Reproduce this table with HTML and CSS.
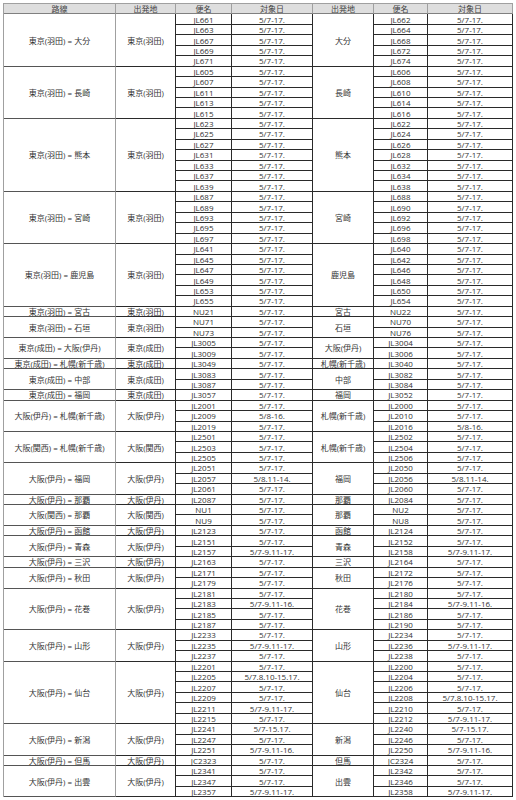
FILE: index.html
```html
<!DOCTYPE html>
<html lang="ja">
<head>
<meta charset="utf-8">
<title>対象便一覧</title>
<link rel="stylesheet" href="styles.css">
</head>
<body>
<table class="flights">
<colgroup>
<col class="c-route"><col class="c-orig"><col class="c-no"><col class="c-date"><col class="c-orig2"><col class="c-no2"><col class="c-date2">
</colgroup>
<thead>
<tr><th class="route">路線</th><th>出発地</th><th>便名</th><th>対象日</th><th>出発地</th><th>便名</th><th>対象日</th></tr>
</thead>
<tbody>
<tr><td class="route" rowspan="5">東京(羽田) = 大分</td><td rowspan="5">東京(羽田)</td><td>JL661</td><td>5/7-17.</td><td rowspan="5">大分</td><td>JL662</td><td>5/7-17.</td></tr>
<tr><td>JL663</td><td>5/7-17.</td><td>JL664</td><td>5/7-17.</td></tr>
<tr><td>JL667</td><td>5/7-17.</td><td>JL668</td><td>5/7-17.</td></tr>
<tr><td>JL669</td><td>5/7-17.</td><td>JL672</td><td>5/7-17.</td></tr>
<tr><td>JL671</td><td>5/7-17.</td><td>JL674</td><td>5/7-17.</td></tr>

<tr><td class="route" rowspan="5">東京(羽田) = 長崎</td><td rowspan="5">東京(羽田)</td><td>JL605</td><td>5/7-17.</td><td rowspan="5">長崎</td><td>JL606</td><td>5/7-17.</td></tr>
<tr><td>JL607</td><td>5/7-17.</td><td>JL608</td><td>5/7-17.</td></tr>
<tr><td>JL611</td><td>5/7-17.</td><td>JL610</td><td>5/7-17.</td></tr>
<tr><td>JL613</td><td>5/7-17.</td><td>JL614</td><td>5/7-17.</td></tr>
<tr><td>JL615</td><td>5/7-17.</td><td>JL616</td><td>5/7-17.</td></tr>

<tr><td class="route" rowspan="7">東京(羽田) = 熊本</td><td rowspan="7">東京(羽田)</td><td>JL623</td><td>5/7-17.</td><td rowspan="7">熊本</td><td>JL622</td><td>5/7-17.</td></tr>
<tr><td>JL625</td><td>5/7-17.</td><td>JL624</td><td>5/7-17.</td></tr>
<tr><td>JL627</td><td>5/7-17.</td><td>JL626</td><td>5/7-17.</td></tr>
<tr><td>JL631</td><td>5/7-17.</td><td>JL628</td><td>5/7-17.</td></tr>
<tr><td>JL633</td><td>5/7-17.</td><td>JL632</td><td>5/7-17.</td></tr>
<tr><td>JL637</td><td>5/7-17.</td><td>JL634</td><td>5/7-17.</td></tr>
<tr><td>JL639</td><td>5/7-17.</td><td>JL638</td><td>5/7-17.</td></tr>

<tr><td class="route" rowspan="5">東京(羽田) = 宮崎</td><td rowspan="5">東京(羽田)</td><td>JL687</td><td>5/7-17.</td><td rowspan="5">宮崎</td><td>JL688</td><td>5/7-17.</td></tr>
<tr><td>JL689</td><td>5/7-17.</td><td>JL690</td><td>5/7-17.</td></tr>
<tr><td>JL693</td><td>5/7-17.</td><td>JL692</td><td>5/7-17.</td></tr>
<tr><td>JL695</td><td>5/7-17.</td><td>JL696</td><td>5/7-17.</td></tr>
<tr><td>JL697</td><td>5/7-17.</td><td>JL698</td><td>5/7-17.</td></tr>

<tr><td class="route" rowspan="6">東京(羽田) = 鹿児島</td><td rowspan="6">東京(羽田)</td><td>JL641</td><td>5/7-17.</td><td rowspan="6">鹿児島</td><td>JL640</td><td>5/7-17.</td></tr>
<tr><td>JL645</td><td>5/7-17.</td><td>JL642</td><td>5/7-17.</td></tr>
<tr><td>JL647</td><td>5/7-17.</td><td>JL646</td><td>5/7-17.</td></tr>
<tr><td>JL649</td><td>5/7-17.</td><td>JL648</td><td>5/7-17.</td></tr>
<tr><td>JL653</td><td>5/7-17.</td><td>JL650</td><td>5/7-17.</td></tr>
<tr><td>JL655</td><td>5/7-17.</td><td>JL654</td><td>5/7-17.</td></tr>

<tr><td class="route">東京(羽田) = 宮古</td><td>東京(羽田)</td><td>NU21</td><td>5/7-17.</td><td>宮古</td><td>NU22</td><td>5/7-17.</td></tr>

<tr><td class="route" rowspan="2">東京(羽田) = 石垣</td><td rowspan="2">東京(羽田)</td><td>NU71</td><td>5/7-17.</td><td rowspan="2">石垣</td><td>NU70</td><td>5/7-17.</td></tr>
<tr><td>NU73</td><td>5/7-17.</td><td>NU76</td><td>5/7-17.</td></tr>

<tr><td class="route" rowspan="2">東京(成田) = 大阪(伊丹)</td><td rowspan="2">東京(成田)</td><td>JL3005</td><td>5/7-17.</td><td rowspan="2">大阪(伊丹)</td><td>JL3004</td><td>5/7-17.</td></tr>
<tr><td>JL3009</td><td>5/7-17.</td><td>JL3006</td><td>5/7-17.</td></tr>

<tr><td class="route">東京(成田) = 札幌(新千歳)</td><td>東京(成田)</td><td>JL3049</td><td>5/7-17.</td><td>札幌(新千歳)</td><td>JL3040</td><td>5/7-17.</td></tr>

<tr><td class="route" rowspan="2">東京(成田) = 中部</td><td rowspan="2">東京(成田)</td><td>JL3083</td><td>5/7-17.</td><td rowspan="2">中部</td><td>JL3082</td><td>5/7-17.</td></tr>
<tr><td>JL3087</td><td>5/7-17.</td><td>JL3084</td><td>5/7-17.</td></tr>

<tr><td class="route">東京(成田) = 福岡</td><td>東京(成田)</td><td>JL3057</td><td>5/7-17.</td><td>福岡</td><td>JL3052</td><td>5/7-17.</td></tr>

<tr><td class="route" rowspan="3">大阪(伊丹) = 札幌(新千歳)</td><td rowspan="3">大阪(伊丹)</td><td>JL2001</td><td>5/7-17.</td><td rowspan="3">札幌(新千歳)</td><td>JL2000</td><td>5/7-17.</td></tr>
<tr><td>JL2009</td><td>5/8-16.</td><td>JL2010</td><td>5/7-17.</td></tr>
<tr><td>JL2019</td><td>5/7-17.</td><td>JL2016</td><td>5/8-16.</td></tr>

<tr><td class="route" rowspan="3">大阪(関西) = 札幌(新千歳)</td><td rowspan="3">大阪(関西)</td><td>JL2501</td><td>5/7-17.</td><td rowspan="3">札幌(新千歳)</td><td>JL2502</td><td>5/7-17.</td></tr>
<tr><td>JL2503</td><td>5/7-17.</td><td>JL2504</td><td>5/7-17.</td></tr>
<tr><td>JL2505</td><td>5/7-17.</td><td>JL2506</td><td>5/7-17.</td></tr>

<tr><td class="route" rowspan="3">大阪(伊丹) = 福岡</td><td rowspan="3">大阪(伊丹)</td><td>JL2051</td><td>5/7-17.</td><td rowspan="3">福岡</td><td>JL2050</td><td>5/7-17.</td></tr>
<tr><td>JL2057</td><td>5/8.11-14.</td><td>JL2056</td><td>5/8.11-14.</td></tr>
<tr><td>JL2061</td><td>5/7-17.</td><td>JL2060</td><td>5/7-17.</td></tr>

<tr><td class="route">大阪(伊丹) = 那覇</td><td>大阪(伊丹)</td><td>JL2087</td><td>5/7-17.</td><td>那覇</td><td>JL2084</td><td>5/7-17.</td></tr>

<tr><td class="route" rowspan="2">大阪(関西) = 那覇</td><td rowspan="2">大阪(関西)</td><td>NU1</td><td>5/7-17.</td><td rowspan="2">那覇</td><td>NU2</td><td>5/7-17.</td></tr>
<tr><td>NU9</td><td>5/7-17.</td><td>NU8</td><td>5/7-17.</td></tr>

<tr><td class="route">大阪(伊丹) = 函館</td><td>大阪(伊丹)</td><td>JL2123</td><td>5/7-17.</td><td>函館</td><td>JL2124</td><td>5/7-17.</td></tr>

<tr><td class="route" rowspan="2">大阪(伊丹) = 青森</td><td rowspan="2">大阪(伊丹)</td><td>JL2151</td><td>5/7-17.</td><td rowspan="2">青森</td><td>JL2152</td><td>5/7-17.</td></tr>
<tr><td>JL2157</td><td>5/7-9.11-17.</td><td>JL2158</td><td>5/7-9.11-17.</td></tr>

<tr><td class="route">大阪(伊丹) = 三沢</td><td>大阪(伊丹)</td><td>JL2163</td><td>5/7-17.</td><td>三沢</td><td>JL2164</td><td>5/7-17.</td></tr>

<tr><td class="route" rowspan="2">大阪(伊丹) = 秋田</td><td rowspan="2">大阪(伊丹)</td><td>JL2171</td><td>5/7-17.</td><td rowspan="2">秋田</td><td>JL2172</td><td>5/7-17.</td></tr>
<tr><td>JL2179</td><td>5/7-17.</td><td>JL2176</td><td>5/7-17.</td></tr>

<tr><td class="route" rowspan="4">大阪(伊丹) = 花巻</td><td rowspan="4">大阪(伊丹)</td><td>JL2181</td><td>5/7-17.</td><td rowspan="4">花巻</td><td>JL2180</td><td>5/7-17.</td></tr>
<tr><td>JL2183</td><td>5/7-9.11-16.</td><td>JL2184</td><td>5/7-9.11-16.</td></tr>
<tr><td>JL2185</td><td>5/7-17.</td><td>JL2186</td><td>5/7-17.</td></tr>
<tr><td>JL2187</td><td>5/7-17.</td><td>JL2190</td><td>5/7-17.</td></tr>

<tr><td class="route" rowspan="3">大阪(伊丹) = 山形</td><td rowspan="3">大阪(伊丹)</td><td>JL2233</td><td>5/7-17.</td><td rowspan="3">山形</td><td>JL2234</td><td>5/7-17.</td></tr>
<tr><td>JL2235</td><td>5/7-9.11-17.</td><td>JL2236</td><td>5/7-9.11-17.</td></tr>
<tr><td>JL2237</td><td>5/7-17.</td><td>JL2238</td><td>5/7-17.</td></tr>

<tr><td class="route" rowspan="6">大阪(伊丹) = 仙台</td><td rowspan="6">大阪(伊丹)</td><td>JL2201</td><td>5/7-17.</td><td rowspan="6">仙台</td><td>JL2200</td><td>5/7-17.</td></tr>
<tr><td>JL2205</td><td>5/7.8.10-15.17.</td><td>JL2204</td><td>5/7-17.</td></tr>
<tr><td>JL2207</td><td>5/7-17.</td><td>JL2206</td><td>5/7-17.</td></tr>
<tr><td>JL2209</td><td>5/7-17.</td><td>JL2208</td><td>5/7.8.10-15.17.</td></tr>
<tr><td>JL2211</td><td>5/7-9.11-17.</td><td>JL2210</td><td>5/7-17.</td></tr>
<tr><td>JL2215</td><td>5/7-17.</td><td>JL2212</td><td>5/7-9.11-17.</td></tr>

<tr><td class="route" rowspan="3">大阪(伊丹) = 新潟</td><td rowspan="3">大阪(伊丹)</td><td>JL2241</td><td>5/7-15.17.</td><td rowspan="3">新潟</td><td>JL2240</td><td>5/7-15.17.</td></tr>
<tr><td>JL2247</td><td>5/7-17.</td><td>JL2246</td><td>5/7-17.</td></tr>
<tr><td>JL2251</td><td>5/7-9.11-16.</td><td>JL2250</td><td>5/7-9.11-16.</td></tr>

<tr><td class="route">大阪(伊丹) = 但馬</td><td>大阪(伊丹)</td><td>JC2323</td><td>5/7-17.</td><td>但馬</td><td>JC2324</td><td>5/7-17.</td></tr>

<tr><td class="route" rowspan="3">大阪(伊丹) = 出雲</td><td rowspan="3">大阪(伊丹)</td><td>JL2341</td><td>5/7-17.</td><td rowspan="3">出雲</td><td>JL2342</td><td>5/7-17.</td></tr>
<tr><td>JL2347</td><td>5/7-17.</td><td>JL2346</td><td>5/7-17.</td></tr>
<tr><td>JL2357</td><td>5/7-9.11-17.</td><td>JL2358</td><td>5/7-9.11-17.</td></tr>
</tbody>
</table>
</body>
</html>
```
FILE: styles.css
```css
html, body {
  margin: 0;
  padding: 0;
  background: #ffffff;
}

body {
  padding: 3px 0 0 3px;
  font-family: "Open Sans", "Noto Sans CJK JP", sans-serif;
  font-size: 8px;
  color: #333333;
}

.flights {
  table-layout: fixed;
  width: 510px;
  border-collapse: separate;
  border-spacing: 0;
  border-top: 1px solid #a0a0a0;
  border-left: 1px solid #a0a0a0;
}

.c-route { width: 112px; }
.c-orig  { width: 60px; }
.c-no    { width: 56px; }
.c-date  { width: 81px; }
.c-orig2 { width: 61px; }
.c-no2   { width: 54px; }
.c-date2 { width: 85px; }

.flights tr {
  height: 10.45px;
}

.flights th,
.flights td {
  box-sizing: border-box;
  padding: 0;
  line-height: 9px;
  text-align: center;
  vertical-align: middle;
  white-space: nowrap;
  overflow: hidden;
  font-weight: normal;
  border-right: 1px solid #2a2a2a;
  border-bottom: 1px solid #2a2a2a;
}

.flights th {
  background: #dedede;
  color: #444444;
  border-right-color: #a0a0a0;
  border-bottom-color: #808080;
}

.flights td.route {
  border-right-color: #a0a0a0;
  border-bottom-color: #555555;
}
```
